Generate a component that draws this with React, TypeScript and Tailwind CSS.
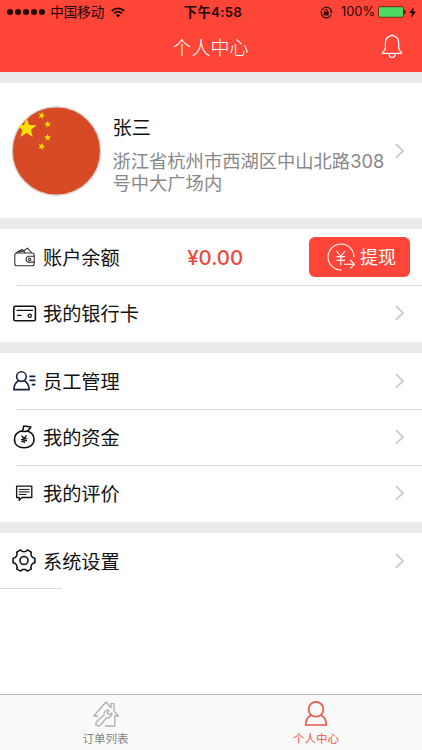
import type { ReactNode } from "react";

const starPoints = (cx: number, cy: number, r: number, turn = 0) =>
  Array.from({ length: 10 }, (_, i) => {
    const a = (i * 36 - 90 + turn) * (Math.PI / 180);
    const d = i % 2 ? r * 0.42 : r;
    return `${cx + d * Math.cos(a)},${cy + d * Math.sin(a)}`;
  }).join(" ");

function Chevron() {
  return (
    <svg className="h-4 w-2.5 shrink-0" viewBox="0 0 10 16" fill="none" stroke="#c7c7cc" strokeWidth="1.7">
      <path d="M1 1.2 8 7.9l-7 6.7" />
    </svg>
  );
}

function RowIcon({ children, color = "#111" }: { children: ReactNode; color?: string }) {
  return (
    <svg className="h-7 w-[26px] shrink-0" viewBox="0 0 26 28" fill="none" stroke={color} strokeWidth="1.6" strokeLinecap="round" strokeLinejoin="round">
      {children}
    </svg>
  );
}

function WalletIcon() {
  return (
    <RowIcon color="#333">
      <g strokeWidth="1.1">
        <rect x="3.8" y="10" width="19.4" height="12.8" rx="2" />
        <path d="M5.5 9.5 11 6.5l3 3M12 8.3l4.5-3.2 4 4.4M8 9.3l4-1.5M23 13.3h-5a2.9 2.9 0 0 0 0 5.8h5" />
        <circle cx="18.7" cy="16.2" r="1.2" />
      </g>
    </RowIcon>
  );
}

function CardIcon() {
  return (
    <RowIcon>
      <rect x="2.8" y="7.3" width="21.6" height="14.4" rx="1.5" />
      <path d="M6 11.3h15.5M6.5 16.3h3.5" strokeWidth="1.3" />
      <circle cx="18.7" cy="16.7" r="1.6" strokeWidth="1.3" />
    </RowIcon>
  );
}

function StaffIcon() {
  return (
    <RowIcon color="#17213d">
      <circle cx="10.4" cy="9.6" r="4.8" />
      <path d="M7.6 13.7c-2.8 1.2-4.5 4-4.8 8.9h15.4c-.3-4.9-2.1-7.7-4.9-8.9" />
      <path d="M18.4 9.4h6M18.4 13.4h6M20.7 17.6h3.7" strokeLinecap="butt" />
    </RowIcon>
  );
}

function MoneyBagIcon() {
  return (
    <RowIcon>
      <path d="M10 8.1C5.9 9.5 3.5 12.7 3.5 16.5c0 5.2 4 8.3 9.6 8.3s9.9-3.1 9.9-8.3c0-3.9-2.7-7.2-6.8-8.4M10.2 8.1c2 .6 4.2.6 6 0M11.9 6.8 12.8 3c2.4.2 4.5.4 7 1l-2.9 4" />
      <path d="m10.8 13 2.6 2.4 1.8-2.7M13.2 15.4v4.4M10.6 16.5l5.2-.9M10.8 18.5l4.8-.8" strokeWidth="1.3" />
    </RowIcon>
  );
}

function CommentIcon() {
  return (
    <RowIcon>
      <path d="M5.6 7.2h15.2v11.3h-10L8.2 21.4v-2.9H5.6Z" strokeWidth="1.3" />
      <path d="M8.2 10.4h10M8.2 12.9h10M8.2 15.4h7" strokeWidth="1" />
    </RowIcon>
  );
}

function GearIcon() {
  return (
    <RowIcon>
      <path d="M9.6 2.9C10.4 4.1 11.6 4.8 13 4.8S15.6 4.1 16.4 2.9L20.3 5.1C19.7 6.5 19.8 7.9 20.5 9.1S22.3 11 23.9 11.2V15.8C22.3 16 21.2 16.7 20.5 17.9S19.7 20.5 20.3 21.9L16.4 24.1C15.6 22.9 14.4 22.2 13 22.2S10.4 22.9 9.6 24.1L5.7 21.9C6.3 20.5 6.2 19.1 5.5 17.9S3.7 16 2.1 15.8V11.2C3.7 11 4.8 10.3 5.5 9.1S6.3 6.5 5.7 5.1Z" />
      <circle cx="13" cy="13.5" r="4" />
    </RowIcon>
  );
}

function Row({ icon, label, line = true, children }: { icon: ReactNode; label: string; line?: boolean; children?: ReactNode }) {
  return (
    <div className="h-14 pl-[11px]">
      <div className="relative flex h-full items-center pr-[17px]">
        {icon}
        <span className="ml-1.5 pt-px text-[19.2px] leading-7">{label}</span>
        {children ?? <span className="ml-auto flex"><Chevron /></span>}
        {line && <span className="absolute right-0 -bottom-px left-1.5 h-px bg-[#d9d9dc]" />}
      </div>
    </div>
  );
}

function StatusBar() {
  return (
    <div className="grid h-6 grid-cols-3 items-center text-[12.5px] leading-6 text-[#210806]">
      <div className="flex items-center pl-[7px]">
        <div className="flex gap-[1.7px]">
          {[0, 1, 2, 3, 4].map((i) => (
            <span key={i} className="size-[6.3px] rounded-full bg-[#210806]" />
          ))}
        </div>
        <span className="ml-[5px] text-[13.5px]">中国移动</span>
        <svg className="ml-[7px] h-[11px] w-[14px]" viewBox="0 0 14 11" fill="none" stroke="currentColor" strokeWidth="1.8">
          <path d="M.8 4C4.3.6 9.7.6 13.2 4M3.1 6.4c2.3-2.1 5.5-2.1 7.8 0" />
          <path d="M4.9 8.2a3.2 3.2 0 0 1 4.2 0L7 10.4Z" fill="currentColor" stroke="none" />
        </svg>
      </div>
      <div className="pl-1 text-center text-[13.3px] font-semibold tracking-[.3px]">下午4:58</div>
      <div className="flex items-center justify-end pr-[6px]">
        <svg className="mr-[8px] size-[13px]" viewBox="0 0 13 13" fill="none" stroke="currentColor">
          <path d="M11.3 8.6A5.3 5.3 0 1 1 11.5 5" strokeWidth="1.1" />
          <path d="m9.6 5.4 1.8 2.2L13 5.4Z" fill="currentColor" stroke="none" />
          <rect x="3.7" y="5.7" width="5" height="3.7" fill="currentColor" stroke="none" />
          <path d="M4.8 6V4.7a1.4 1.4 0 0 1 2.8 0V6" />
        </svg>
        <span className="text-[12.8px]">100%</span>
        <svg className="ml-[3px] h-3 w-7" viewBox="0 0 28 12">
          <rect x=".5" y=".7" width="25" height="10.6" rx="1.8" fill="#4cd964" stroke="#7c2418" />
          <path d="M26.3 4v4c2-.5 2-3.5 0-4Z" fill="#210806" />
        </svg>
        <svg className="ml-[3px] h-[11px] w-[7px]" viewBox="0 0 7 11" fill="currentColor">
          <path d="M5 0 0 6h3L2 11l5-6.5H4Z" />
        </svg>
      </div>
    </div>
  );
}

function Flag() {
  return (
    <svg className="size-[90px] shrink-0" viewBox="0 0 90 90">
      <defs>
        <clipPath id="avatar"><circle cx="45" cy="45" r="44" /></clipPath>
      </defs>
      <circle cx="45.4" cy="45" r="44.2" fill="#d64b25" stroke="#ddd2cf" strokeWidth="1.3" />
      <g fill="#ffde00" clipPath="url(#avatar)">
        <polygon points={starPoints(15.6, 22.6, 10.5)} />
        <polygon points={starPoints(30.6, 9.6, 3.7, 20)} />
        <polygon points={starPoints(36.6, 18.3, 3.7, -10)} />
        <polygon points={starPoints(36.6, 31.6, 3.7)} />
        <polygon points={starPoints(30.6, 40.6, 3.7, 20)} />
      </g>
    </svg>
  );
}

export default function App() {
  return (
    <div className="flex h-[750px] w-[422px] flex-col overflow-hidden bg-white font-[Inter,'Noto_Sans_CJK_SC',sans-serif] text-[#111]">
      <header className="h-[72px] shrink-0 bg-[#ff4438]">
        <StatusBar />
        <div className="grid h-12 grid-cols-[1fr_auto_1fr] items-center pr-px">
          <span />
          <h1 className="pt-[3px] text-[19px] font-light text-white">个人中心</h1>
          <svg className="mr-4 mb-1 size-[26px] justify-self-end" viewBox="0 0 26 26" fill="none" stroke="white" strokeWidth="1.2" strokeLinejoin="round">
            <path d="M11.3 3.2a2 2 0 0 1 3.6 0c3.2.9 4.8 3.6 4.8 6.9v4.7c0 2.1 1.1 3.3 2.9 4.6v1H3.5v-1c1.8-1.3 2.9-2.5 2.9-4.6v-4.7c0-3.3 1.7-6 4.9-6.9ZM9.9 20.7c.3 4.9 6.1 4.9 6.4 0" />
          </svg>
        </div>
      </header>

      <main className="flex flex-1 flex-col">
        <div className="h-[11px] bg-[#eaeaec]" />
        <section className="flex h-[135px] items-center pr-[17px] pl-[11px]">
          <Flag />
          <div className="ml-[11.5px] flex-1 pt-[7px]">
            <div className="mb-2 text-[19.2px] leading-7">张三</div>
            <p className="w-[280px] text-[18.3px] leading-[22px] text-[#888]">浙江省杭州市西湖区中山北路308<br />号中大广场内</p>
          </div>
          <Chevron />
        </section>
        <div className="h-[11px] bg-[#eaeaec]" />
        <section className="h-[113px]">
          <Row icon={<WalletIcon />} label="账户余额">
            <span className="ml-[67.5px] pt-[2px] text-[20.4px] leading-7 font-medium text-[#e84b3d]">¥0.00</span>
            <button className="-mr-[5px] ml-auto flex h-10 w-[101px] items-center rounded-[6px] bg-[#ff4438] pl-[18px] text-[18px] text-white">
              <svg className="mr-[5px] size-7 shrink-0" viewBox="0 0 28 28" fill="none" stroke="currentColor" strokeWidth="1.1">
                <path d="M14.5 27A13 13 0 1 1 27 14.3M9.5 8l4.3 5.3L18 8M13.8 13.3v9M9.5 13.6H18M9.5 17.4H18M17 21.2h10.2M23.2 17l4.2 4.2-4.2 4.2" />
              </svg>
              <span className="pt-px">提现</span>
            </button>
          </Row>
          <Row icon={<CardIcon />} label="我的银行卡" line={false} />
        </section>
        <div className="h-[11px] bg-[#eaeaec]" />
        <section className="h-[169px]">
          <Row icon={<StaffIcon />} label="员工管理" />
          <Row icon={<MoneyBagIcon />} label="我的资金" />
          <Row icon={<CommentIcon />} label="我的评价" line={false} />
        </section>
        <div className="h-[11px] bg-[#eaeaec]" />
        <Row icon={<GearIcon />} label="系统设置" line={false} />
        <div className="-mt-px h-px w-[62px] bg-[#d9d9dc]" />
      </main>

      <nav className="grid h-14 shrink-0 grid-cols-2 border-t border-[#bfbfc1] bg-[#f9f9f9] text-[11.5px] leading-4">
        <div className="flex flex-col items-center pt-[5px] text-[#858585]">
          <svg className="h-[29px] w-7" viewBox="0 0 28 29" fill="none" stroke="#b0b0b0" strokeWidth="1.3" strokeLinejoin="round">
            <path d="M5.5 16H1.8L14 2l5 5.7V3.6h3v7.5l4.5 4.9h-3.7v10H13M5.5 16v1" />
            <path d="M17 10.2c-3-.7-5.6 1.7-4.9 4.8l-7.4 6.6c-2.4 2.4 1.1 6 3.5 3.6l6.5-7.5c3.1.6 5.6-1.6 5.2-4.6l-2.7 2-2-2Z" />
          </svg>
          <span className="mt-[2px]">订单列表</span>
        </div>
        <div className="flex flex-col items-center pt-[5px] pr-px text-[#e95548]">
          <svg className="h-[29px] w-7" viewBox="0 0 28 29" fill="none" stroke="currentColor" strokeWidth="1.7" strokeLinejoin="round">
            <circle cx="14" cy="9.3" r="7.4" />
            <path d="M9.2 15C5.8 16.5 3.8 19.7 3.6 25h20.8c-.2-5.3-2.2-8.5-5.6-10" />
          </svg>
          <span className="mt-[2px]">个人中心</span>
        </div>
      </nav>
    </div>
  );
}
